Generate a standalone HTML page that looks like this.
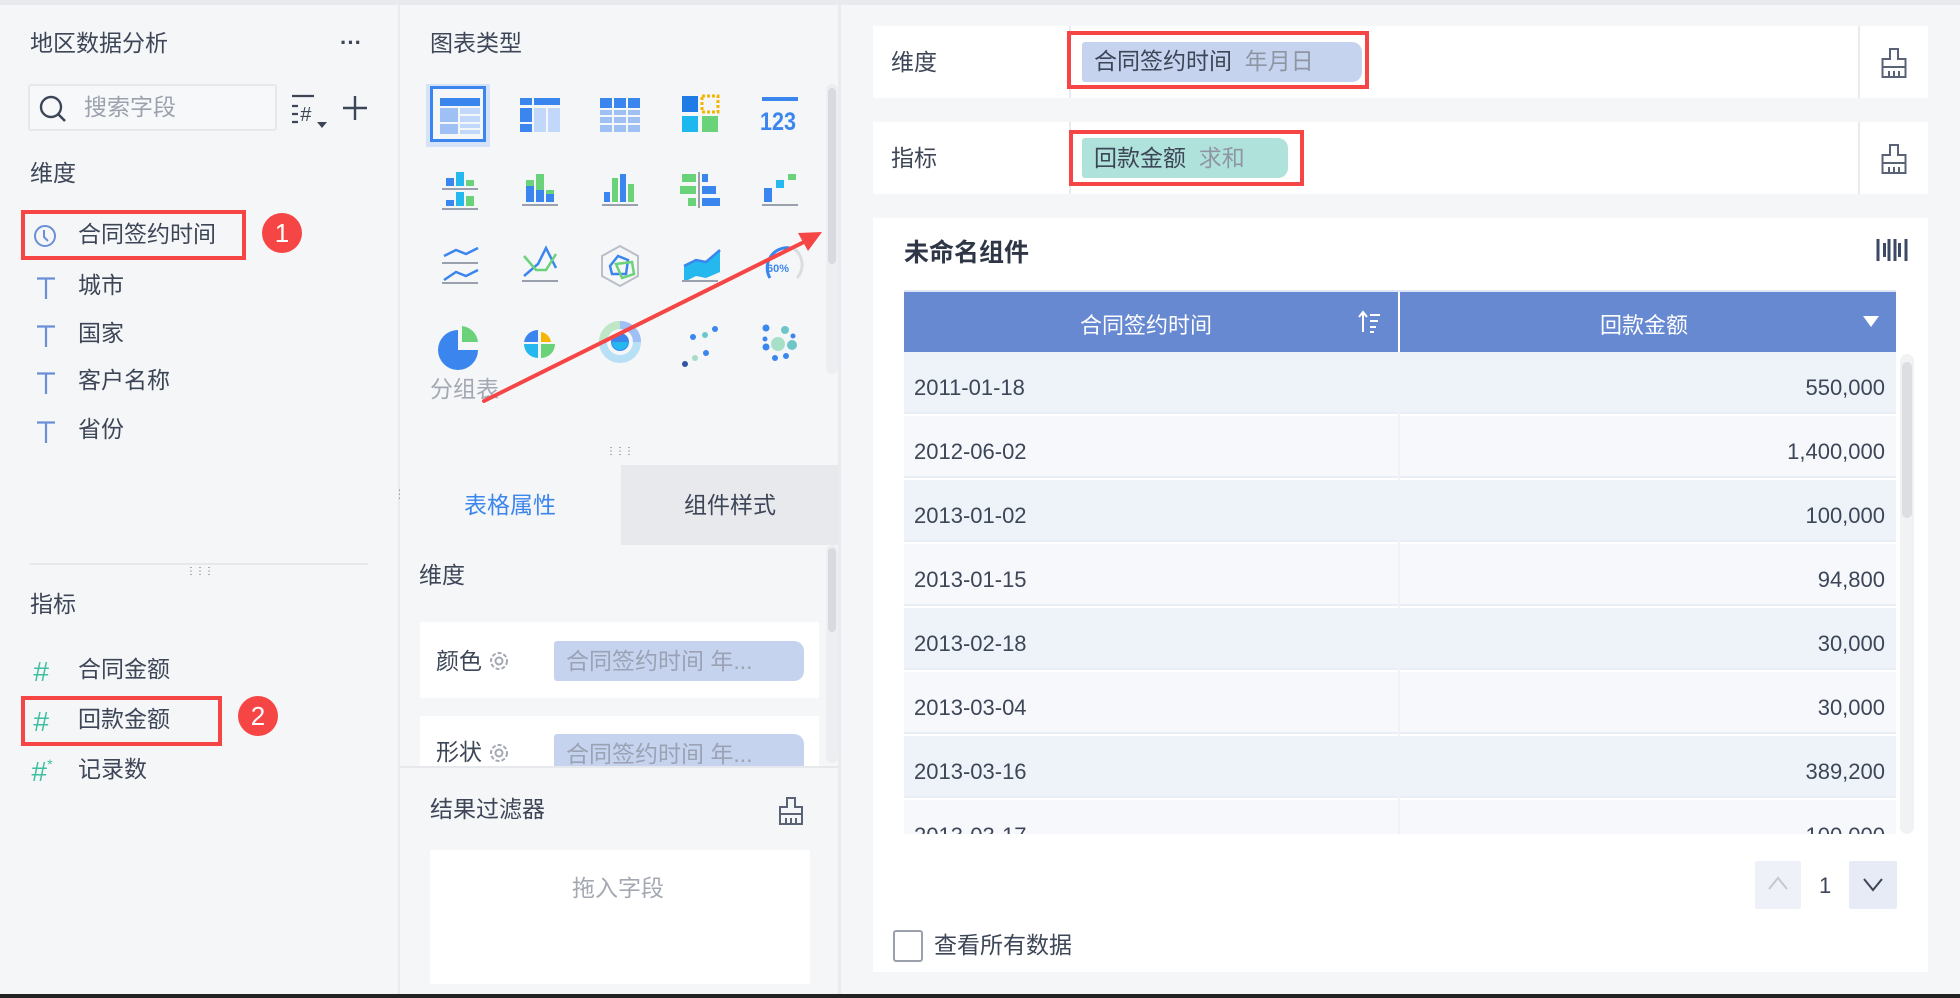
<!DOCTYPE html>
<html><head><meta charset="utf-8">
<style>
*{margin:0;padding:0;box-sizing:border-box}
body{width:1960px;height:998px;overflow:hidden;background:#f5f6f8;font-family:"Liberation Sans","Noto Sans CJK SC",sans-serif;color:#3d4657;position:relative}
.a{position:absolute;white-space:nowrap}
.t{font-size:23px;line-height:1}
.red{position:absolute;border:4px solid #f64545}
.badge{position:absolute;width:40px;height:40px;border-radius:50%;background:#f64545;color:#fff;font-size:26px;line-height:40px;text-align:center}
.T{position:absolute;left:36px;width:20px;height:22px}
</style></head><body>
<div class="a" style="left:0;top:0;width:1960px;height:5px;background:#e9eaed"></div>
<div class="a" style="left:398px;top:5px;width:2px;height:990px;background:#eaebee"></div>
<div class="a" style="left:838px;top:5px;width:3px;height:990px;background:#eaebee"></div>
<div class="a" style="left:0;top:994px;width:1960px;height:4px;background:#222"></div>

<!-- LEFT -->
<div class="a t" style="left:30px;top:32px">地区数据分析</div>
<div class="a" style="left:340px;top:30px;font-size:22px;font-weight:bold">···</div>
<div class="a" style="left:28px;top:84px;width:249px;height:47px;border:2px solid #e6e8ec;border-radius:3px;background:#f7f8fa"></div>
<svg class="a" style="left:38px;top:94px" width="30" height="30" viewBox="0 0 30 30"><circle cx="13" cy="13" r="10" fill="none" stroke="#3d4657" stroke-width="2.4"/><path d="M20 20l7 7" stroke="#3d4657" stroke-width="2.6"/></svg>
<div class="a t" style="left:84px;top:96px;color:#9ba2ae">搜索字段</div>
<svg class="a" style="left:290px;top:92px" width="44" height="40" viewBox="0 0 44 40"><path d="M2 4h22M2 14h6M2 22h6M2 30h6" stroke="#3d4657" stroke-width="2.2"/><text x="10" y="29" font-size="20" font-family="Liberation Sans" fill="#3d4657" font-style="italic">#</text><path d="M27 30h10l-5 6z" fill="#3d4657"/></svg>
<svg class="a" style="left:341px;top:94px" width="28" height="28"><path d="M14 2v24M2 14h24" stroke="#3d4657" stroke-width="2.4"/></svg>
<div class="a t" style="left:30px;top:162px">维度</div>
<div class="red" style="left:21px;top:210px;width:225px;height:50px"></div>
<svg class="a" style="left:33px;top:224px" width="24" height="24"><circle cx="12" cy="12" r="10" fill="none" stroke="#6a8fd6" stroke-width="2"/><path d="M11 6v7l4 4" fill="none" stroke="#6a8fd6" stroke-width="2"/></svg>
<div class="a t" style="left:78px;top:223px">合同签约时间</div>
<div class="badge" style="left:262px;top:213px">1</div>
<svg class="T" style="top:277px" viewBox="0 0 20 22"><path d="M1 1.5h18M10 1.5V22" stroke="#6a8fd6" stroke-width="2.2"/></svg><div class="a t" style="left:78px;top:274px">城市</div>
<svg class="T" style="top:325px" viewBox="0 0 20 22"><path d="M1 1.5h18M10 1.5V22" stroke="#6a8fd6" stroke-width="2.2"/></svg><div class="a t" style="left:78px;top:322px">国家</div>
<svg class="T" style="top:372px" viewBox="0 0 20 22"><path d="M1 1.5h18M10 1.5V22" stroke="#6a8fd6" stroke-width="2.2"/></svg><div class="a t" style="left:78px;top:369px">客户名称</div>
<svg class="T" style="top:421px" viewBox="0 0 20 22"><path d="M1 1.5h18M10 1.5V22" stroke="#6a8fd6" stroke-width="2.2"/></svg><div class="a t" style="left:78px;top:418px">省份</div>
<div class="a" style="left:30px;top:563px;width:338px;height:2px;background:#e6e8ec"></div>
<div class="a" style="left:186px;top:566px;font-size:10px;letter-spacing:-1px;color:#666">⋮⋮⋮</div>
<div class="a t" style="left:30px;top:593px">指标</div>
<div class="a" style="left:33px;top:656px;font-size:28px;color:#3fbfa0;font-style:italic">#</div><div class="a t" style="left:78px;top:658px">合同金额</div>
<div class="red" style="left:21px;top:696px;width:201px;height:50px"></div>
<div class="a" style="left:33px;top:706px;font-size:28px;color:#3fbfa0;font-style:italic">#</div><div class="a t" style="left:78px;top:708px">回款金额</div>
<div class="badge" style="left:238px;top:696px">2</div>
<div class="a" style="left:31px;top:756px;font-size:28px;color:#3fbfa0;font-style:italic">#<span style="font-size:14px;vertical-align:top">*</span></div><div class="a t" style="left:78px;top:758px">记录数</div>

<!-- MIDDLE -->
<div class="a t" style="left:430px;top:32px">图表类型</div>
<div class="a" style="left:426px;top:84px;width:64px;height:63px;background:#d5e2f7"></div>
<div class="a" style="left:430px;top:86px;width:56px;height:56px;border:3px solid #3b86ee;background:#f5f6f8"></div>
<div class="a" style="left:826px;top:84px;width:12px;height:290px;border-radius:6px;background:#eceef1"></div>
<div class="a" style="left:828px;top:88px;width:8px;height:176px;border-radius:4px;background:#d8dadf"></div>
<svg class="a" style="left:420px;top:80px" width="400" height="300" viewBox="0 0 400 300">
<rect x="20" y="18" width="40" height="8" fill="#3b86ee"/><rect x="20" y="28" width="18" height="14" fill="#9ec0f5"/><rect x="40" y="28" width="20" height="6" fill="#c2d8fa"/><rect x="40" y="36" width="20" height="6" fill="#c2d8fa"/><rect x="20" y="44" width="18" height="10" fill="#9ec0f5"/><rect x="40" y="44" width="20" height="4" fill="#c2d8fa"/><rect x="40" y="50" width="20" height="4" fill="#c2d8fa"/>
<rect x="100" y="18" width="12" height="7" fill="#3b86ee"/><rect x="114" y="18" width="26" height="7" fill="#3b86ee"/><rect x="100" y="28" width="12" height="14" fill="#3b86ee"/><rect x="100" y="44" width="12" height="8" fill="#3b86ee"/><rect x="114" y="28" width="12" height="24" fill="#c2d8fa"/><rect x="128" y="28" width="12" height="24" fill="#c2d8fa"/>
<rect x="180" y="18" width="40" height="10" fill="#3b86ee"/><rect x="180" y="30" width="40" height="22" fill="#9ec0f5"/><path d="M193 18v34M207 18v34M180 36h40M180 44h40" stroke="#f5f6f8" stroke-width="2"/>
<rect x="262" y="16" width="16" height="16" fill="#1f7be6"/><rect x="282" y="16" width="16" height="16" fill="none" stroke="#f5b500" stroke-width="3" stroke-dasharray="3 2"/><rect x="262" y="36" width="16" height="16" fill="#1fb8ee"/><rect x="282" y="36" width="16" height="16" fill="#6ad37a"/>
<rect x="342" y="17" width="36" height="4" fill="#3b86ee"/><text x="340" y="50" font-size="25" font-family="Liberation Sans" font-weight="bold" fill="#3b86ee" textLength="36" lengthAdjust="spacingAndGlyphs">123</text>
<rect x="26" y="98" width="8" height="8" fill="#3b86ee"/><rect x="36" y="92" width="8" height="14" fill="#24b8ee"/><rect x="46" y="100" width="8" height="6" fill="#6ad37a"/><path d="M22 109h36M22 129h36" stroke="#9aa1ad" stroke-width="2"/><rect x="26" y="120" width="8" height="6" fill="#3b86ee"/><rect x="36" y="112" width="8" height="14" fill="#24b8ee"/><rect x="46" y="116" width="8" height="10" fill="#6ad37a"/>
<rect x="106" y="106" width="8" height="16" fill="#3b86ee"/><rect x="106" y="100" width="8" height="6" fill="#6ad37a"/><rect x="116" y="110" width="8" height="12" fill="#3b86ee"/><rect x="116" y="94" width="8" height="16" fill="#6ad37a"/><rect x="126" y="114" width="8" height="8" fill="#3b86ee"/><rect x="126" y="110" width="8" height="4" fill="#6ad37a"/><path d="M102 125h36" stroke="#9aa1ad" stroke-width="2"/>
<rect x="184" y="112" width="6" height="10" fill="#3b86ee"/><rect x="192" y="98" width="6" height="24" fill="#6ad37a"/><rect x="200" y="94" width="6" height="28" fill="#3b86ee"/><rect x="208" y="104" width="6" height="18" fill="#6ad37a"/><path d="M182 125h36" stroke="#9aa1ad" stroke-width="2"/>
<rect x="262" y="94" width="14" height="8" fill="#6ad37a"/><rect x="260" y="106" width="16" height="8" fill="#6ad37a"/><rect x="268" y="118" width="8" height="8" fill="#6ad37a"/><path d="M279 92v36" stroke="#9aa1ad" stroke-width="2"/><rect x="282" y="94" width="6" height="8" fill="#3b86ee"/><rect x="282" y="106" width="14" height="8" fill="#3b86ee"/><rect x="282" y="118" width="18" height="8" fill="#3b86ee"/>
<rect x="344" y="108" width="8" height="14" fill="#3b86ee"/><rect x="356" y="100" width="8" height="8" fill="#24b8ee"/><rect x="368" y="94" width="8" height="6" fill="#6ad37a"/><path d="M342 125h36" stroke="#9aa1ad" stroke-width="2"/>
<path d="M24 176l12-6 10 4 12-6M24 200l12-8 10 4 12-6" fill="none" stroke="#3b86ee" stroke-width="2.5"/><path d="M22 183h36M22 203h36" stroke="#9aa1ad" stroke-width="2"/>
<path d="M104 196l14-12 8-16 10 20" fill="none" stroke="#3b86ee" stroke-width="2.5"/><path d="M104 176l12 14h10l10-16" fill="none" stroke="#6ad37a" stroke-width="2.5"/><path d="M102 201h36" stroke="#9aa1ad" stroke-width="2"/>
<path d="M200 166l18 10v20l-18 10-18-10v-20z" fill="none" stroke="#b9bec7" stroke-width="2"/><path d="M190 186l8-10 10 4-2 14-14 0z" fill="none" stroke="#3b86ee" stroke-width="2.5"/><path d="M196 184l16-2 2 12-12 4z" fill="none" stroke="#6ad37a" stroke-width="2.5"/>
<path d="M264 186l12-6 10 2 14-12v22l-14 6-10-2-12 6z" fill="#24b8ee"/><path d="M264 186l12-6 10 2 14-12" fill="none" stroke="#3b86ee" stroke-width="2.5"/><path d="M262 201h36" stroke="#9aa1ad" stroke-width="2"/>
<path d="M350 198a20 20 0 0 1 20-30" fill="none" stroke="#3b86ee" stroke-width="3"/><path d="M373 168a20 20 0 0 1 4 30" fill="none" stroke="#dcdde0" stroke-width="3"/><text x="347" y="192" font-size="11" font-weight="bold" font-family="Liberation Sans" fill="#3b86ee">60%</text>
<path d="M38 250v20h20a20 20 0 1 1-20-20z" fill="#3b86ee"/><path d="M42 246a18 18 0 0 1 16 16h-16z" fill="#6ad37a"/>
<path d="M118 250v12h-14a14 14 0 0 1 14-12z" fill="#3b86ee"/><path d="M104 264h14v14a14 14 0 0 1-14-14z" fill="#24b8ee"/><path d="M121 264h14a14 14 0 0 1-14 14z" fill="#6ad37a"/><path d="M121 252a12 12 0 0 1 10 10h-10z" fill="#f5b500"/>
<circle cx="200" cy="262" r="17" fill="none" stroke="#b7dff5" stroke-width="8"/><path d="M200 245a17 17 0 0 1 17 17" fill="none" stroke="#9ec0f5" stroke-width="8"/><path d="M183 262a17 17 0 0 1 17-17" fill="none" stroke="#bfe6c7" stroke-width="8"/><circle cx="200" cy="262" r="9" fill="#3b86ee"/><path d="M192 262a8 8 0 0 0 16 0z" fill="#24b8ee"/>
<circle cx="265" cy="284" r="3" fill="#2f55a4"/><circle cx="275" cy="278" r="3" fill="#a8dcc8"/><circle cx="286" cy="273" r="3" fill="#3b86ee"/><circle cx="273" cy="257" r="3" fill="#3b86ee"/><circle cx="285" cy="255" r="3" fill="#6ec6c8"/><circle cx="295" cy="249" r="3" fill="#3b86ee"/>
<circle cx="358" cy="264" r="7" fill="#a8dfc9"/><circle cx="346" cy="248" r="3.5" fill="#3b86ee"/><circle cx="365" cy="250" r="4" fill="#6ec6c8"/><circle cx="373" cy="256" r="2.5" fill="#3b86ee"/><circle cx="372" cy="265" r="5" fill="#6ec6c8"/><circle cx="366" cy="276" r="3" fill="#3b86ee"/><circle cx="355" cy="278" r="3" fill="#3b86ee"/><circle cx="346" cy="267" r="3.5" fill="#3b86ee"/><circle cx="345" cy="259" r="2.5" fill="#3b86ee"/>
</svg>
<div class="a t" style="left:430px;top:378px;color:#a3a8b2">分组表</div>
<div class="a" style="left:606px;top:446px;font-size:10px;letter-spacing:-1px;color:#666">⋮⋮⋮</div>
<div class="a" style="left:394px;top:487px;font-size:12px;color:#666">⋮</div>
<div class="a" style="left:400px;top:465px;width:221px;height:80px;background:#f5f6f8"></div>
<div class="a" style="left:621px;top:465px;width:218px;height:80px;background:#e8e9ec"></div>
<div class="a t" style="left:464px;top:494px;color:#3b86ee">表格属性</div>
<div class="a t" style="left:684px;top:494px">组件样式</div>
<div class="a t" style="left:419px;top:564px">维度</div>
<div class="a" style="left:826px;top:545px;width:12px;height:218px;border-radius:6px;background:#eceef1"></div>
<div class="a" style="left:828px;top:548px;width:8px;height:84px;border-radius:4px;background:#d8dadf"></div>
<div class="a" style="left:420px;top:622px;width:399px;height:76px;background:#fff"></div>
<div class="a t" style="left:436px;top:650px">颜色</div>
<svg class="a" style="left:488px;top:650px" width="22" height="22"><circle cx="11" cy="11" r="8" fill="none" stroke="#a3a8b2" stroke-width="2" stroke-dasharray="4 2"/><circle cx="11" cy="11" r="3.5" fill="none" stroke="#a3a8b2" stroke-width="2"/></svg>
<div class="a" style="left:554px;top:641px;width:250px;height:40px;border-radius:3px 10px 10px 3px;background:#c5d3ef"></div>
<div class="a t" style="left:566px;top:650px;color:#9aa2b4">合同签约时间 年...</div>
<div class="a" style="left:420px;top:716px;width:399px;height:51px;background:#fff;overflow:hidden"><div class="a t" style="left:16px;top:25px">形状</div><div class="a" style="left:134px;top:18px;width:250px;height:40px;border-radius:3px 10px 10px 3px;background:#c5d3ef"></div><div class="a t" style="left:146px;top:27px;color:#9aa2b4">合同签约时间 年...</div></div>
<svg class="a" style="left:488px;top:742px" width="22" height="22"><circle cx="11" cy="11" r="8" fill="none" stroke="#a3a8b2" stroke-width="2" stroke-dasharray="4 2"/><circle cx="11" cy="11" r="3.5" fill="none" stroke="#a3a8b2" stroke-width="2"/></svg>
<div class="a" style="left:400px;top:766px;width:439px;height:2px;background:#e6e8ec"></div>
<div class="a t" style="left:430px;top:798px">结果过滤器</div>
<svg class="a" style="left:778px;top:796px" width="26" height="30" viewBox="0 0 26 30"><path d="M9 2h8v9h7v17H2V11h7z M2 18h22 M8 22v6M13 22v6M18 22v6" fill="none" stroke="#5a6375" stroke-width="2"/></svg>
<div class="a" style="left:430px;top:850px;width:380px;height:134px;background:#fff"></div>
<div class="a t" style="left:572px;top:877px;color:#a3a8b2">拖入字段</div>

<!-- RIGHT -->
<div class="a" style="left:873px;top:26px;width:1055px;height:72px;background:#fff"></div>
<div class="a" style="left:1069px;top:26px;width:2px;height:72px;background:#eaebee"></div>
<div class="a" style="left:1858px;top:26px;width:2px;height:72px;background:#eaebee"></div>
<div class="a t" style="left:891px;top:51px">维度</div>
<div class="a" style="left:1082px;top:42px;width:280px;height:40px;border-radius:3px 10px 10px 3px;background:#c5d3ef"></div>
<div class="a t" style="left:1094px;top:50px">合同签约时间&nbsp;&nbsp;<span style="color:#8f96a3">年月日</span></div>
<div class="red" style="left:1067px;top:31px;width:302px;height:58px"></div>
<svg class="a" style="left:1880px;top:47px" width="28" height="32" viewBox="0 0 28 32"><path d="M10 2h8v10h7.5v18H2.5V12H10z M2.5 20h23 M9 24v6M14 24v6M19 24v6" fill="none" stroke="#5a6375" stroke-width="2"/></svg>

<div class="a" style="left:873px;top:122px;width:1055px;height:72px;background:#fff"></div>
<div class="a" style="left:1069px;top:122px;width:2px;height:72px;background:#eaebee"></div>
<div class="a" style="left:1858px;top:122px;width:2px;height:72px;background:#eaebee"></div>
<div class="a t" style="left:891px;top:147px">指标</div>
<div class="a" style="left:1082px;top:138px;width:206px;height:40px;border-radius:3px 10px 10px 3px;background:#b0e2dc"></div>
<div class="a t" style="left:1094px;top:147px">回款金额&nbsp;&nbsp;<span style="color:#8f96a3">求和</span></div>
<div class="red" style="left:1069px;top:130px;width:235px;height:56px"></div>
<svg class="a" style="left:1880px;top:143px" width="28" height="32" viewBox="0 0 28 32"><path d="M10 2h8v10h7.5v18H2.5V12H10z M2.5 20h23 M9 24v6M14 24v6M19 24v6" fill="none" stroke="#5a6375" stroke-width="2"/></svg>

<div class="a" style="left:873px;top:218px;width:1055px;height:754px;background:#fff"></div>
<div class="a" style="left:904px;top:233px;font-size:25px;font-weight:bold;color:#2f3747">未命名组件</div>
<svg class="a" style="left:1876px;top:237px" width="32" height="26"><path d="M2 2v22M30 2v22M13 2v22M19 2v22" stroke="#3d4a66" stroke-width="3"/><rect x="7" y="6" width="3" height="14" fill="#3d4a66"/><rect x="22" y="6" width="3" height="14" fill="#3d4a66"/></svg>
<div class="a" style="left:904px;top:290px;width:992px;height:62px;background:#6789d1;border-top:2px solid #dfe6f5"></div>
<div class="a" style="left:1398px;top:292px;width:2px;height:60px;background:#fff"></div>
<div class="a" style="left:1080px;top:308px;font-size:22px;color:#fff">合同签约时间</div>
<div class="a" style="left:1600px;top:308px;font-size:22px;color:#fff">回款金额</div>
<svg class="a" style="left:1358px;top:310px" width="24" height="24"><path d="M5 22V3M1 7l4-5 4 5" fill="none" stroke="#fff" stroke-width="2"/><path d="M12 5h10M12 11h8M12 17h6M12 22h4" stroke="#fff" stroke-width="2"/></svg>
<svg class="a" style="left:1862px;top:315px" width="18" height="14"><path d="M1 1h16L9 12z" fill="#fff"/></svg>
<div id="rows" class="a" style="left:904px;top:352px;width:992px;height:482px;overflow:hidden"></div>
<div class="a" style="left:1900px;top:354px;width:14px;height:480px;border-radius:7px;background:#f1f2f4"></div>
<div class="a" style="left:1902px;top:362px;width:10px;height:156px;border-radius:5px;background:#dcdee2"></div>
<div class="a" style="left:1755px;top:861px;width:46px;height:48px;background:#eef2f8;border-radius:2px"></div>
<svg class="a" style="left:1768px;top:876px" width="20" height="14"><path d="M1 13L10 2l9 11" fill="none" stroke="#c4c8cf" stroke-width="2"/></svg>
<div class="a" style="left:1819px;top:873px;font-size:22px">1</div>
<div class="a" style="left:1849px;top:861px;width:48px;height:48px;background:#e6ebf5;border-radius:2px"></div>
<svg class="a" style="left:1863px;top:878px" width="20" height="14"><path d="M1 1l9 11 9-11" fill="none" stroke="#3d4657" stroke-width="2"/></svg>
<div class="a" style="left:893px;top:930px;width:30px;height:32px;border:2px solid #9aa1ad;border-radius:3px;background:#fff"></div>
<div class="a t" style="left:934px;top:934px">查看所有数据</div>

<svg class="a" style="left:0;top:0" width="1960" height="998"><path d="M484 401L808 240" stroke="#f64545" stroke-width="4" stroke-linecap="round"/><path d="M822 232l-24 1 10 18z" fill="#f64545"/></svg>

<script>
var d=[["2011-01-18","550,000"],["2012-06-02","1,400,000"],["2013-01-02","100,000"],["2013-01-15","94,800"],["2013-02-18","30,000"],["2013-03-04","30,000"],["2013-03-16","389,200"],["2013-03-17","100,000"]];
var h="";for(var i=0;i<d.length;i++){var bg=i%2==0?"#eef3fa":"#f6f8fc";h+='<div style="position:absolute;left:0;top:'+(i*64)+'px;width:992px;height:62px;background:'+bg+';border-bottom:2px solid #e8edf6"><div style="position:absolute;left:494px;top:0;width:2px;height:64px;background:#f0f2f6"></div><span style="position:absolute;left:10px;top:23px;font-size:22px;color:#3d4657">'+d[i][0]+'</span><span style="position:absolute;right:11px;top:23px;font-size:22px;color:#3d4657">'+d[i][1]+'</span></div>';}
document.getElementById("rows").innerHTML=h;
</script>
</body></html>
